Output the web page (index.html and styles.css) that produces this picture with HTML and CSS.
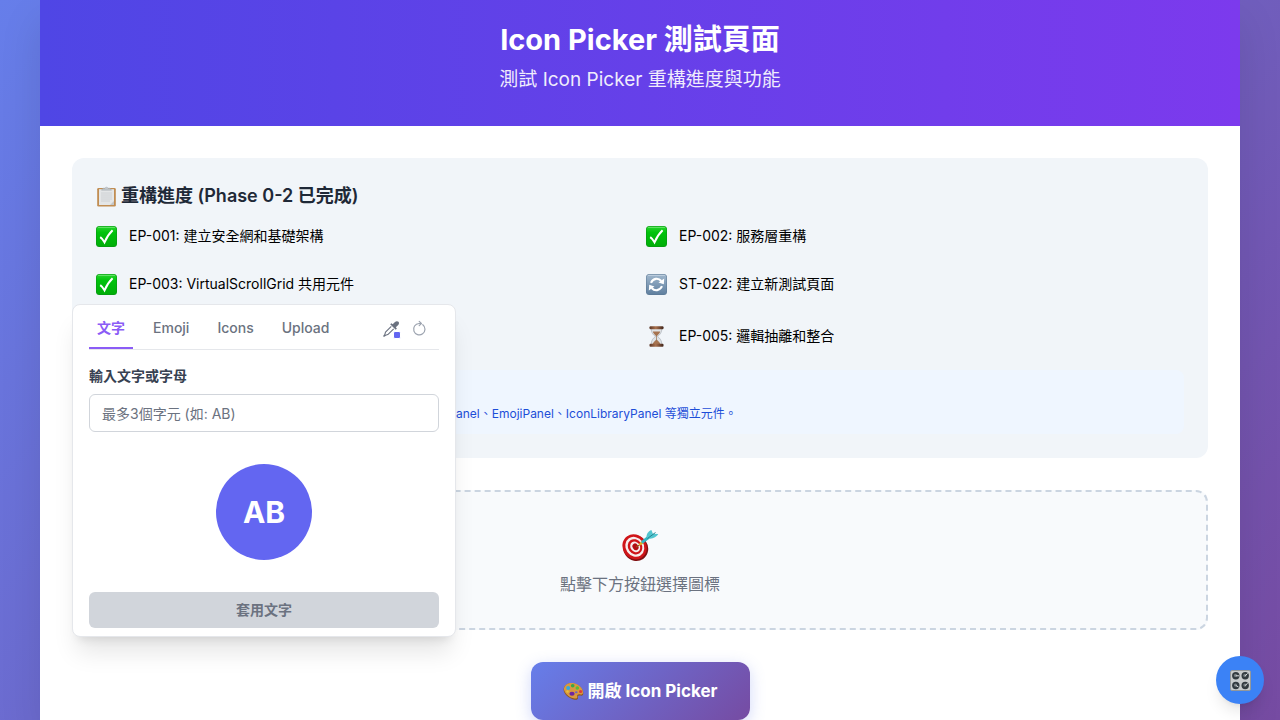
FILE: index.html
```html
<!DOCTYPE html>
<html lang="zh-Hant">
<head>
<meta charset="utf-8">
<meta name="viewport" content="width=device-width, initial-scale=1">
<title>Icon Picker 測試頁面</title>
<link rel="stylesheet" href="styles.css">
</head>
<body>
<svg class="defs" aria-hidden="true">
  <defs>
    <linearGradient id="green" x1="0" y1="0" x2="0" y2="1"><stop offset="0" stop-color="#27d52c"/><stop offset=".3" stop-color="#00c30c"/><stop offset="1" stop-color="#00ad08"/></linearGradient>
    <linearGradient id="steel" x1="0" y1="0" x2="0" y2="1"><stop offset="0" stop-color="#9fb6cc"/><stop offset="1" stop-color="#5f7f9f"/></linearGradient>
    <linearGradient id="wood" x1="0" y1="0" x2="1" y2="0"><stop offset="0" stop-color="#5a3524"/><stop offset=".45" stop-color="#a9714e"/><stop offset="1" stop-color="#40241a"/></linearGradient>
    <symbol id="check" viewBox="0 0 21 21">
      <rect width="21" height="21" rx="3.5" fill="#0b8f16"/>
      <rect x=".5" y=".5" width="20" height="20" rx="3" fill="url(#green)"/>
      <path d="M2.5 1.4h16" stroke="#7ae97c" stroke-width=".8" stroke-linecap="round"/>
      <path d="M4.2 11.2c1.8 1.2 3 2.900 4.300 5.100C10.600 11.500 13.200 7.500 16.600 4.300" fill="none" stroke="#fff" stroke-width="2"/>
    </symbol>
  </defs>
</svg>

<div class="container">
  <header class="banner">
    <h1 class="banner-title">Icon Picker 測試頁面</h1>
    <p class="banner-subtitle">測試 Icon Picker 重構進度與功能</p>
  </header>

  <main class="content">
    <section class="progress">
      <h2 class="progress-title">
        <svg class="emoji" viewBox="0 0 21 21" aria-hidden="true">
          <rect x="1.200" y="2" width="18.600" height="18.600" rx="1.300" fill="#c18d52"/>
          <rect x="3" y="3.200" width="15" height="15.800" fill="#e4e6e7"/>
          <path d="M14 19h4v-4z" fill="#c4c6c8"/>
          <path d="M5 7h11M5 9h11M5 11h11M5 13h11M5 15h9" stroke="#cccfd1" stroke-width=".9"/>
          <path d="M5.500 4.200 7 2.200h2a1.600 1.600 0 0 1 3 0h2l1.500 2z" fill="#c1c6ca" stroke="#959ba1" stroke-width=".4"/>
        </svg>
        重構進度 (Phase 0-2 已完成)
      </h2>
      <ul class="steps">
        <li class="step"><svg class="emoji"><use href="#check"/></svg>EP-001: 建立安全網和基礎架構</li>
        <li class="step"><svg class="emoji"><use href="#check"/></svg>EP-002: 服務層重構</li>
        <li class="step"><svg class="emoji"><use href="#check"/></svg>EP-003: VirtualScrollGrid 共用元件</li>
        <li class="step">
          <svg class="emoji" viewBox="0 0 21 21" aria-hidden="true">
            <rect width="21" height="21" rx="3.500" fill="#5b7793"/>
            <rect x=".5" y=".5" width="20" height="20" rx="3" fill="url(#steel)"/>
            <path d="M2.500 1.400h16" stroke="#c8d7e5" stroke-width=".8" stroke-linecap="round"/>
            <path d="M5 8.800c2-4.600 7.300-5.300 10.300-1.800M16 12.200c-2 4.600-7.300 5.300-10.300 1.800" fill="none" stroke="#fff" stroke-width="2.100"/>
            <path d="m18.200 4.600-.4 5.700-5.300-1.700zM2.800 16.400l.4-5.700 5.300 1.700z" fill="#fff"/>
          </svg>ST-022: 建立新測試頁面</li>
        <li class="step step-last"></li>
        <li class="step step-last">
          <svg class="emoji" viewBox="0 0 21 21" aria-hidden="true">
            <path d="M5.200 2.500h10.600c0 4-1.500 6-4.300 8 2.800 2 4.300 4 4.300 8H5.200c0-4 1.500-6 4.300-8-2.800-2-4.300-4-4.300-8z" fill="#dfe3e6" stroke="#a4aab0" stroke-width=".6"/>
            <path d="M6.800 5.500h7.400c-.6 2-1.900 3.300-3.700 4.700-1.800-1.400-3.100-2.700-3.700-4.700zM10.500 13.500c1.500 1.500 3.500 2.500 4 5h-8c.5-2.500 2.500-3.500 4-5z" fill="#a67450"/>
            <path d="M10.500 9v6" stroke="#9b7351" stroke-width=".7"/>
            <rect x="3.500" y=".2" width="14" height="3" rx="1" fill="url(#wood)"/>
            <rect x="3.500" y="17.800" width="14" height="3" rx="1" fill="url(#wood)"/>
          </svg>EP-005: 邏輯抽離和整合</li>
      </ul>
      <div class="note"><p class="note-text">anel、EmojiPanel、IconLibraryPanel 等獨立元件。</p></div>
    </section>

    <section class="preview">
      <svg class="target" viewBox="0 0 40 40" aria-hidden="true">
        <ellipse cx="15.700" cy="24.300" rx="12.300" ry="13" transform="rotate(-35 15.700 24.300)" fill="#7f1012"/>
        <ellipse cx="14.600" cy="22.800" rx="11.800" ry="13" transform="rotate(-35 14.600 22.800)" fill="#cf1519"/>
        <ellipse cx="14.800" cy="22.800" rx="9.100" ry="10.300" transform="rotate(-35 14.800 22.800)" fill="#f7eeee"/>
        <ellipse cx="15" cy="22.800" rx="6.900" ry="8" transform="rotate(-35 15 22.800)" fill="#cf1519"/>
        <ellipse cx="15.200" cy="22.800" rx="4.700" ry="5.600" transform="rotate(-35 15.200 22.800)" fill="#f7eeee"/>
        <ellipse cx="15.500" cy="22.800" rx="2.800" ry="3.500" transform="rotate(-35 15.500 22.800)" fill="#b30f13"/>
        <path d="m16 23 5-3" stroke="#8a6a1c" stroke-width="1"/>
        <path d="m18.500 20.500 3-3.500 2 2.500-3.500 2z" fill="#e3ad1f"/>
        <path d="m21.500 17 6-5 2.200 2.500-6.500 4.800c-1.300.5-2.500-1-1.700-2.300z" fill="#35b6c4"/>
        <path d="M26.700 13.500c-.6-3 1.400-6.200 4.700-7.500l1.500 3.700 5.300.4c-1.400 2.700-5.400 5-9.200 4.500z" fill="#51c5cf"/>
        <path d="m27.500 14.500 8-6" stroke="#23828f" stroke-width="1"/>
      </svg>
      <p class="preview-text">點擊下方按鈕選擇圖標</p>
    </section>

    <button class="open-button" type="button">
      <svg class="emoji" viewBox="0 0 21 21" aria-hidden="true">
        <path d="M.7 7.700C1.400 3.700 5.500 1.600 10 2.300c5.700.9 10.500 5.400 10.300 10.300-.1 2-1.500 2.400-3 2-1.600-.4-2.900.1-2.400 1.700.5 1.700-.8 2.700-3 2.400C5.700 17.900-.1 12.300.7 7.700z" fill="#8c551b"/>
        <path d="M1 7C1.900 3.500 5.700 1.500 10 2.100c5.500.9 10.100 5 10 9.700-.1 1.700-1.400 2-2.800 1.600-2-.5-3.400.4-2.900 2 .5 1.500-.8 2.400-2.800 2C5.900 16.900.2 11.200 1 7z" fill="#d9993f"/>
        <circle cx="5.200" cy="6.900" r="2" fill="#32a9e2"/><circle cx="9.700" cy="4.800" r="1.800" fill="#39a945"/>
        <circle cx="14.300" cy="7" r="1.800" fill="#58bd37"/><circle cx="17.600" cy="10.500" r="1.600" fill="#dd3a38"/>
        <ellipse cx="9" cy="12.800" rx="2.600" ry="2" fill="#6d26a0"/><circle cx="4.500" cy="10.500" r="1.200" fill="#e9c334"/>
        <ellipse cx="13.300" cy="11.300" rx="1.300" ry="1" fill="#6c62c1"/>
      </svg>
      開啟 Icon Picker
    </button>
  </main>

  <div class="picker" role="dialog" aria-label="Icon Picker">
    <div class="picker-header">
      <div class="tabs" role="tablist">
        <button class="tab tab-active" type="button" role="tab" aria-selected="true">文字</button>
        <button class="tab" type="button" role="tab">Emoji</button>
        <button class="tab" type="button" role="tab">Icons</button>
        <button class="tab" type="button" role="tab">Upload</button>
      </div>
      <div class="tools">
        <button class="tool" type="button" aria-label="選擇顏色">
          <svg class="tool-icon" viewBox="0 0 16 16" aria-hidden="true">
            <path d="M8.300 5.300 2.500 11.200 1.800 13.600.7 15l.4.300 1.500-1 2.200-.7 5.900-5.800" fill="none" stroke="#6b7280" stroke-width="1.100" stroke-linejoin="round"/>
            <path d="M7.200 3.300 8.400 2.200l1.300 1.100 2-2.100C13-.1 14.700-.1 15.500.8c.8.900.7 2.200-.3 3.200l-2.400 2.300 1.100 1.300-1.200 1.200z" fill="#6b7280"/>
          </svg>
          <span class="swatch"></span>
        </button>
        <button class="tool" type="button" aria-label="重設">
          <svg class="tool-icon" viewBox="0 0 16 16" aria-hidden="true">
            <path d="M11.800 3.700A5.700 5.700 0 1 1 8 2.500h1.600" fill="none" stroke="#9ca3af" stroke-width="1.200" stroke-linecap="round"/>
            <path d="M8.200.4 10.400 2.500 8.200 4.600" fill="none" stroke="#9ca3af" stroke-width="1.200" stroke-linecap="round" stroke-linejoin="round"/>
          </svg>
        </button>
      </div>
    </div>
    <form class="panel">
      <label class="field-label" for="icon-text">輸入文字或字母</label>
      <input class="field" id="icon-text" type="text" maxlength="3" placeholder="最多3個字元 (如: AB)">
      <div class="avatar">AB</div>
      <button class="apply" type="button" disabled>套用文字</button>
    </form>
  </div>
</div>

<button class="fab" type="button" aria-label="控制面板">
  <svg class="emoji" viewBox="0 0 21 21" aria-hidden="true">
    <rect x=".5" y=".5" width="20" height="20" rx="1.500" fill="#c9cccd" stroke="#93989b"/>
    <g fill="#333b40"><circle cx="5.800" cy="5.800" r="3.700"/><circle cx="15.200" cy="5.800" r="3.700"/><circle cx="5.800" cy="15.500" r="3.700"/><circle cx="15.200" cy="15.500" r="3.700"/></g>
    <g fill="#777f83"><circle cx="5.500" cy="5.400" r="1.600"/><circle cx="14.900" cy="5.400" r="1.600"/><circle cx="5.500" cy="15.100" r="1.600"/><circle cx="14.900" cy="15.100" r="1.600"/></g>
    <path d="M5.800 5.800H9M15.200 5.800l2.400-2.400M5.800 15.500l2.600 1.400M15.200 15.500l2.500-2.300" stroke="#eef0f1" stroke-width=".9"/>
  </svg>
</button>
</body>
</html>
```
FILE: styles.css
```css
* { box-sizing: border-box; }

body {
  margin: 0;
  min-height: 100vh;
  padding: 0 40px;
  overflow: hidden;
  font-family: Inter, "Noto Sans CJK TC", sans-serif;
  font-size: 14px;
  line-height: 20px;
  color: #000;
  background: linear-gradient(135deg, #667eea 0%, #764ba2 100%);
}

h1, h2, p, ul { margin: 0; padding: 0; }
button, input { font: inherit; }
button { border: 0; background: none; cursor: pointer; }

.defs { position: absolute; width: 0; height: 0; }

.emoji { flex: none; width: 21px; height: 21px; }

.container {
  position: relative;
  max-width: 1200px;
  min-height: 100vh;
  margin: 0 auto;
  background: #fff;
  box-shadow: 0 20px 40px rgba(0, 0, 0, 0.1);
}

.banner {
  padding: 22px 32px 32px;
  text-align: center;
  color: #fff;
  background: linear-gradient(90deg, #4f46e5, #7c3aed);
}
.banner-title { font-size: 29px; line-height: 36px; font-weight: 700; }
.banner-subtitle { margin-top: 8px; font-size: 19px; line-height: 28px; opacity: 0.9; }

.content { display: flex; flex-direction: column; gap: 32px; padding: 32px 32px 0; }

.progress { padding: 24px; border-radius: 12px; background: #f1f5f9; }
.progress-title {
  display: flex;
  align-items: center;
  gap: 4px;
  margin-bottom: 8px;
  font-size: 18px;
  line-height: 28px;
  font-weight: 600;
  color: #1f2937;
}
.steps { display: grid; grid-template-columns: 1fr 1fr; gap: 12px; list-style: none; }
.step { display: flex; align-items: center; gap: 12px; min-height: 36px; }
.step-last { min-height: 44px; }

.note {
  margin-top: 12px;
  padding: 36px 12px 12px 360px;
  border-radius: 8px;
  background: #eff6ff;
}
.note-text { font-size: 12px; line-height: 16px; color: #1d4ed8; }

.preview {
  display: flex;
  flex-direction: column;
  align-items: center;
  gap: 8px;
  padding: 32px;
  border: 2px dashed #cbd5e1;
  border-radius: 12px;
  background: #f8fafc;
}
.target { width: 40px; height: 40px; }
.preview-text { font-size: 16px; line-height: 24px; color: #6b7280; }

.open-button {
  display: flex;
  align-items: center;
  align-self: center;
  gap: 4px;
  padding: 16px 32px;
  border-radius: 12px;
  font-size: 17px;
  line-height: 26px;
  font-weight: 700;
  color: #fff;
  background: linear-gradient(135deg, #667eea, #764ba2);
  box-shadow: 0 4px 15px rgba(102, 126, 234, 0.3);
}

.picker {
  position: absolute;
  top: 304px;
  left: 32px;
  width: 384px;
  padding: 4px 16px 8px;
  border: 1px solid #e5e7eb;
  border-radius: 8px;
  background: #fff;
  box-shadow: 0 20px 25px -5px rgba(0, 0, 0, 0.1), 0 8px 10px -6px rgba(0, 0, 0, 0.1);
}
.picker-header {
  display: flex;
  justify-content: space-between;
  border-bottom: 1px solid #e5e7eb;
}
.tabs { display: flex; gap: 12px; }
.tab {
  height: 40px;
  padding: 0 8px;
  border-bottom: 2px solid transparent;
  font-weight: 500;
  color: #6b7280;
}
.tab-active { border-bottom-color: #8b5cf6; font-weight: 600; color: #8b5cf6; }
.tools { display: flex; align-items: center; gap: 4px; padding-right: 8px; }
.tool { position: relative; display: flex; width: 24px; height: 24px; padding: 4px; }
.tool-icon { width: 16px; height: 16px; overflow: visible; }
.swatch {
  position: absolute;
  right: 2px;
  bottom: 2px;
  width: 8px;
  height: 8px;
  border: 1px solid #fff;
  border-radius: 2px;
  background: #6366f1;
}

.panel { display: flex; flex-direction: column; padding-top: 16px; }
.field-label { margin-bottom: 8px; font-weight: 600; color: #374151; }
.field {
  width: 100%;
  height: 38px;
  padding: 8px 12px;
  border: 1px solid #d1d5db;
  border-radius: 6px;
  background: #fff;
}
.field::placeholder { color: #6b7280; opacity: 1; }
.avatar {
  display: grid;
  place-items: center;
  align-self: center;
  width: 96px;
  height: 96px;
  margin: 32px 0;
  border-radius: 50%;
  font-size: 30px;
  line-height: 36px;
  font-weight: 700;
  color: #fff;
  background: #6366f1;
}
.apply {
  height: 36px;
  border-radius: 6px;
  font-weight: 600;
  color: #6b7280;
  background: #d1d5db;
}

.fab {
  position: fixed;
  right: 16px;
  bottom: 16px;
  display: grid;
  place-items: center;
  width: 48px;
  height: 48px;
  padding: 0;
  border-radius: 50%;
  background: #3b82f6;
  box-shadow: 0 10px 15px -3px rgba(0, 0, 0, 0.1), 0 4px 6px -4px rgba(0, 0, 0, 0.1);
}
```
